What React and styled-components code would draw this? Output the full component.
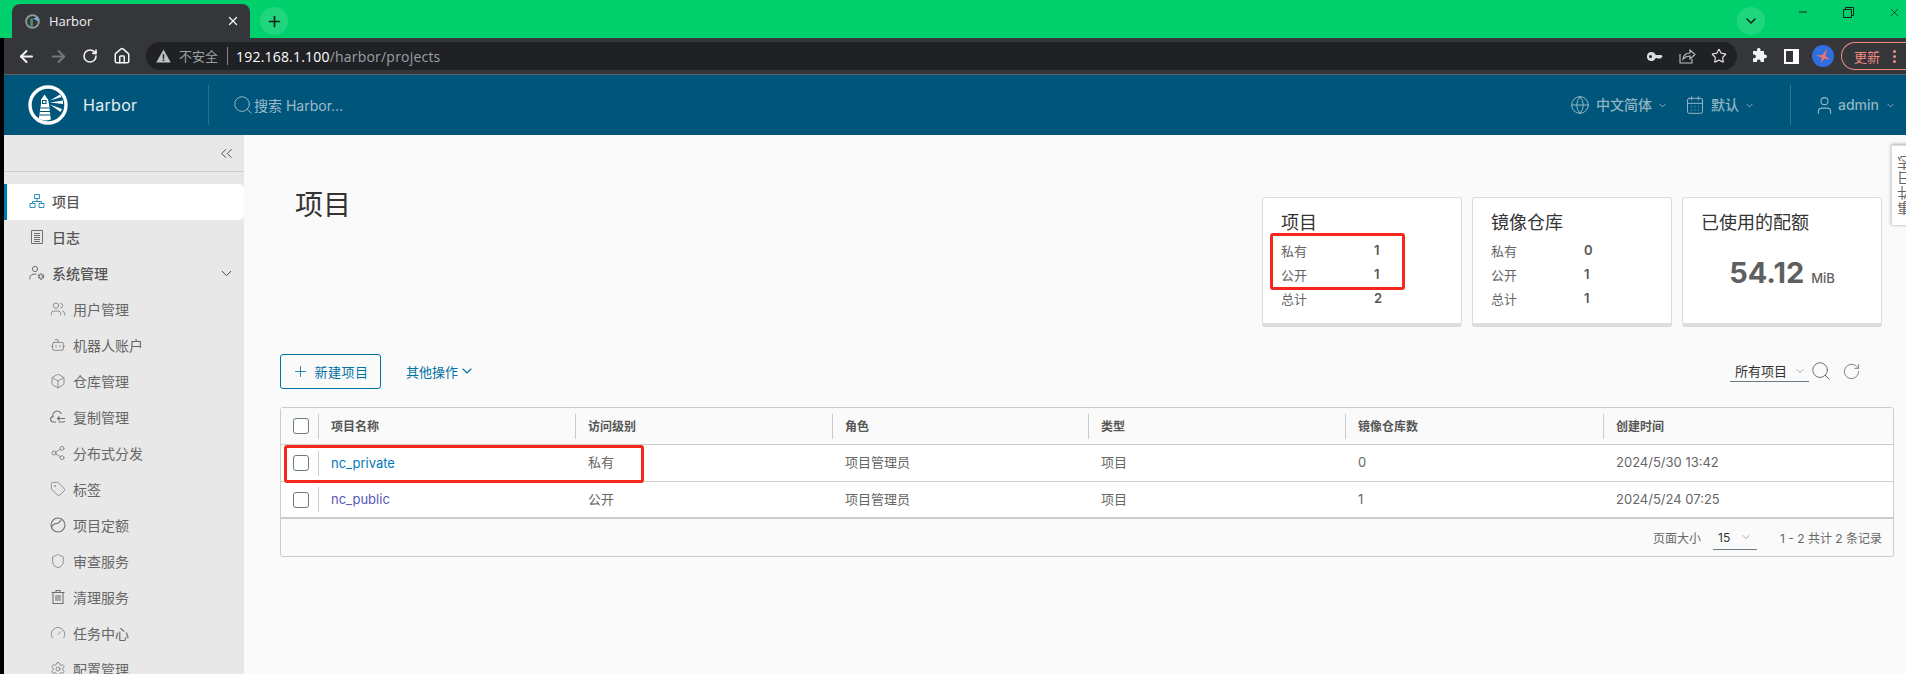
import React from 'react';
import styled, { createGlobalStyle } from 'styled-components';
import {
  ArrowLeft, ArrowRight, RotateCw, Home, Star, Users, Bot, Box, Share2, Tag, Shield, Gauge, Settings,
  Globe, CalendarDays, User, ChevronDown, ChevronsLeft, Search, Plus, X, Minus,
} from 'lucide-react';

const GlobalStyle = createGlobalStyle`
  html, body {
    margin: 0;
    padding: 0;
    background: #fafafa;
  }
  * {
    box-sizing: border-box;
  }
  body {
    font-family: Inter, "Noto Sans CJK SC", sans-serif;
  }
`;

const Window = styled.div`
  position: relative;
  width: 1906px;
  height: 674px;
  overflow: hidden;
  display: flex;
  flex-direction: column;
  background: #000;
`;

/* browser chrome */
const TabStrip = styled.div`
  height: 38px;
  flex: none;
  background: #00d06b;
  display: flex;
  align-items: flex-end;
  padding-left: 12px;
`;

const Tab = styled.div`
  width: 238px;
  height: 34px;
  background: #35363a;
  border-radius: 8px 8px 0 0;
  display: flex;
  align-items: center;
  padding: 0 10px 0 13px;
  color: #f1f3f4;
  font: 13px "Open Sans", "Noto Sans CJK SC", sans-serif;
`;

const TabTitle = styled.span`
  margin-left: 9px;
  flex: 1;
`;

const NewTab = styled.div`
  width: 28px;
  height: 28px;
  border-radius: 50%;
  background: #1fd67e;
  color: #12261b;
  display: flex;
  align-items: center;
  justify-content: center;
  margin: 0 0 3px 10px;
`;

const TabSearch = styled(NewTab)`
  margin-left: auto;
`;

const WindowButtons = styled.div`
  display: flex;
  align-items: center;
  gap: 34px;
  align-self: flex-start;
  height: 24px;
  margin-left: 32px;
  padding-right: 5px;
  color: #10231a;
`;

const Frame = styled.div`
  flex: 1;
  min-height: 0;
  margin-left: 4px;
  display: flex;
  flex-direction: column;
  background: #fafafa;
`;

const Toolbar = styled.div`
  height: 37px;
  flex: none;
  background: #35363a;
  border-bottom: 1px solid #5f6368;
  display: flex;
  align-items: center;
  padding-left: 6px;
  overflow: hidden;
`;

const ChromeButton = styled.div`
  width: 32px;
  height: 28px;
  flex: none;
  display: flex;
  align-items: center;
  justify-content: center;
  color: ${(props) => (props.$dim ? '#75777b' : '#f1f3f4')};
`;

const Omnibox = styled.div`
  flex: 1;
  height: 28px;
  margin: 0 6px 0 8px;
  border-radius: 14px;
  background: #202124;
  display: flex;
  align-items: center;
  padding: 0 2px 0 10px;
  font: 14px "Open Sans", "Noto Sans CJK SC", sans-serif;
  color: #9aa0a6;
`;

const SecurityLabel = styled.span`
  margin-left: 8px;
  font-size: 13px;
  padding-right: 9px;
  border-right: 1px solid #80868b;
  line-height: 18px;
`;

const Url = styled.span`
  margin-left: 8px;
  letter-spacing: 0.2px;
  flex: 1;
  b {
    font-weight: 500;
    color: #fff;
  }
`;

const UpdatePill = styled.div`
  width: 65px;
  height: 28px;
  flex: none;
  margin-left: 2px;
  border: 1px solid #f28b82;
  border-right: 0;
  border-radius: 14px 0 0 14px;
  display: flex;
  align-items: center;
  padding-left: 12px;
  color: #f28b82;
  font: 13px "Noto Sans CJK SC", sans-serif;
`;

const PillDots = styled.span`
  display: flex;
  flex-direction: column;
  gap: 2px;
  margin-left: 13px;
  i {
    width: 3px;
    height: 3px;
    border-radius: 50%;
    background: #f28b82;
  }
`;

/* harbor header */
const TopNav = styled.div`
  height: 60px;
  flex: none;
  background: #00567a;
  display: flex;
  align-items: center;
  color: #8fb4c5;
`;

const Brand = styled.div`
  width: 205px;
  height: 40px;
  display: flex;
  align-items: center;
  padding-left: 24px;
  border-right: 1px solid rgba(255, 255, 255, 0.15);
  color: #fff;
  font-size: 16px;
`;

const BrandName = styled.span`
  margin-left: 15px;
  color: #e4eef3;
  letter-spacing: 0.3px;
`;

const NavSearch = styled.div`
  display: flex;
  align-items: center;
  margin-left: 23px;
  font-size: 14px;
  color: #9dbccb;
`;

const NavMenus = styled.div`
  display: flex;
  align-items: center;
  margin-left: auto;
`;

const NavItem = styled.div`
  display: flex;
  align-items: center;
  font-size: 14px;
  font-weight: 500;
  margin-right: ${(props) => props.$gap || 0}px;
  span {
    margin: 0 5px 2px 6px;
  }
`;

const UserMenu = styled(NavItem)`
  height: 40px;
  padding: 0 10px 0 23px;
  border-left: 1px solid rgba(255, 255, 255, 0.2);
  margin-left: 35px;
  span {
    margin: 0 6px 2px 3px;
  }
`;

/* page body */
const Body = styled.div`
  flex: 1;
  min-height: 0;
  display: flex;
`;

const Sidebar = styled.div`
  width: 240px;
  flex: none;
  background: #e8e8e8;
`;

const Collapse = styled.div`
  height: 37px;
  border-bottom: 1px solid #cdcdcd;
  display: flex;
  align-items: center;
  justify-content: flex-end;
  padding: 0 8px 0 0;
  color: #444;
  margin-bottom: 12px;
`;

const NavRow = styled.div`
  height: 36px;
  display: flex;
  align-items: center;
  padding: 0 0 2px ${(props) => (props.$sub ? 46 : 25)}px;
  font-size: 14px;
  font-weight: ${(props) => (props.$sub ? 400 : 500)};
  color: ${(props) => (props.$sub ? '#666' : '#565656')};
  background: ${(props) => (props.$active ? '#fff' : 'transparent')};
  border-left: ${(props) => (props.$active ? '3px solid #0079b8' : '0')};
  border-radius: ${(props) => (props.$active ? '0 5px 5px 0' : '0')};
  svg {
    flex: none;
    color: ${(props) => (props.$active ? '#2d8fbd' : '#707070')};
    margin-left: ${(props) => (props.$active ? '-3px' : '0')};
  }
`;

const NavLabel = styled.span`
  margin-left: 7px;
  flex: 1;
`;

const NavCaret = styled.div`
  display: flex;
  margin-right: 9px;
  svg {
    margin: 0;
    color: #444;
  }
`;

const Main = styled.div`
  flex: 1;
  min-width: 0;
  background: #fafafa;
  padding: 52px 12px 0 36px;
`;

const PageHead = styled.div`
  display: flex;
  justify-content: space-between;
  align-items: flex-start;
`;

const PageTitle = styled.h1`
  margin: 0 0 0 15px;
  font-size: 28px;
  font-weight: 400;
  line-height: 36px;
  color: #333;
`;

const Cards = styled.div`
  display: flex;
  gap: 10px;
  margin: 10px 12px 0 0;
`;

const Card = styled.div`
  position: relative;
  width: 200px;
  height: 130px;
  background: #fff;
  border: 1px solid #ddd;
  border-bottom-width: 4px;
  border-radius: 3px;
  padding: 13px 18px 0;
`;

const CardTitle = styled.div`
  font-size: 18px;
  line-height: 24px;
  color: #333;
`;

const CardRows = styled.div`
  margin-top: 3px;
`;

const CardRow = styled.div`
  display: flex;
  height: 24px;
  align-items: center;
  font-size: 13px;
  color: #666;
  label {
    width: 93px;
  }
  b {
    font-weight: 600;
    color: #565656;
  }
`;

const QuotaValue = styled.div`
  display: flex;
  align-items: baseline;
  justify-content: center;
  margin-top: 20px;
  color: #5f5f5f;
  font-size: 29px;
  font-weight: 700;
  small {
    font-size: 13px;
    font-weight: 500;
    margin-left: 7px;
  }
`;

const RedMark = styled.div`
  position: absolute;
  border: 3px solid #f5261b;
  border-radius: 3px;
  pointer-events: none;
  left: ${(props) => props.$left}px;
  top: ${(props) => props.$top}px;
  width: ${(props) => props.$width}px;
  height: ${(props) => props.$height}px;
`;

const ActionBar = styled.div`
  height: 36px;
  margin-top: 26px;
  display: flex;
  align-items: center;
  padding-right: 33px;
`;

const NewButton = styled.div`
  width: 101px;
  height: 35px;
  border: 1px solid #0072a3;
  border-radius: 3px;
  display: flex;
  align-items: center;
  justify-content: center;
  gap: 5px;
  color: #0072a3;
  font-size: 13px;
  letter-spacing: 0.5px;
`;

const MoreActions = styled.div`
  display: flex;
  align-items: center;
  gap: 1px;
  margin-left: 25px;
  font-size: 13px;
  color: #0072a3;
`;

const FilterSelect = styled.div`
  margin-left: auto;
  width: 79px;
  height: 22px;
  border-bottom: 1px solid #6a7a84;
  display: flex;
  align-items: center;
  justify-content: space-between;
  padding: 0 3px 0 5px;
  font-size: 13px;
  color: #333;
  svg {
    color: #aaa;
  }
`;

const ActionIcon = styled.div`
  display: flex;
  margin-left: ${(props) => props.$gap}px;
  color: #666;
`;

const TableBox = styled.div`
  position: relative;
  margin-top: 18px;
  border: 1px solid #ccc;
  border-radius: 3px;
  background: #fafafa;
`;

const Row = styled.div`
  display: grid;
  grid-template-columns: 37px 257px 257px 256px 257px 258px 1fr;
  height: 37px;
  align-items: center;
  font-size: 13px;
  color: #666;
  background: ${(props) => (props.$head ? '#fafafa' : '#fff')};
  border-bottom: ${(props) => (props.$last ? '2px' : '1px')} solid #ccc;
  ${(props) => props.$head && 'font-size: 12px; font-weight: 600; color: #565656;'}
`;

const CheckCell = styled.div`
  display: flex;
  padding-left: 12px;
`;

const CheckBox = styled.div`
  width: 16px;
  height: 16px;
  border: 1px solid #6a7a84;
  border-radius: 3px;
  background: #fff;
`;

const Cell = styled.div`
  height: ${(props) => (props.$divider ? 25 : 26)}px;
  line-height: 25px;
  padding-left: 12px;
  border-left: 1px solid ${(props) => (props.$divider ? '#ccc' : 'transparent')};
`;

const ProjectLink = styled.span`
  color: ${(props) => (props.$visited ? '#5659b6' : '#0079b8')};
`;

const TableFooter = styled.div`
  height: 37px;
  display: flex;
  align-items: center;
  justify-content: flex-end;
  padding-right: 11px;
  font-size: 12px;
  color: #666;
`;

const PageSize = styled.div`
  width: 44px;
  height: 24px;
  margin: 0 23px 0 12px;
  border-bottom: 1px solid #6a7a84;
  display: flex;
  align-items: center;
  justify-content: space-between;
  padding: 0 5px;
  color: #333;
  svg {
    color: #aaa;
  }
`;

const SideTab = styled.div`
  position: absolute;
  right: -13px;
  top: 145px;
  width: 28px;
  height: 81px;
  background: #fff;
  border: 1px solid #ddd;
  box-shadow: 0 1px 3px rgba(0, 0, 0, 0.3);
  writing-mode: vertical-rl;
  transform: rotate(180deg);
  text-align: center;
  font-size: 14px;
  letter-spacing: 1px;
  line-height: 26px;
  color: #666;
`;

/* drawings */
const HarborLogo = () => (
  <svg width="40" height="40" viewBox="0 0 40 40" fill="none">
    <circle cx="20" cy="20" r="18" stroke="#fff" strokeWidth="3.4" />
    <path d="M13 14h7l1 5 1.8 15.5a16 16 0 0 1-12 -.5L13 19z" fill="#fff" />
    <path d="M13.5 14 16.5 9.5 19.5 14z" fill="#fff" />
    <path d="M14.5 15.5h3.5v3h-3.5zM12.5 23h9M12 26.5h10M11.5 30h11" stroke="#00567a" strokeWidth="1.1" />
    <path d="M22 15.5 32 9.5l1.5 2.5zM22 17.5l13-2v3.5zM22 19.5l12 4.5-1.5 3z" fill="#fff" />
  </svg>
);

const Favicon = () => (
  <svg width="15" height="15" viewBox="0 0 40 40" fill="none">
    <circle cx="20" cy="20" r="17" stroke="#8d9a96" strokeWidth="5" />
    <path d="M14 12h7v22h-7z" fill="#4e8f6a" />
    <path d="M22 12l13-5v13z" fill="#6fb0d8" />
  </svg>
);

const WarningIcon = () => (
  <svg width="15" height="14" viewBox="0 0 16 15">
    <path d="M8 .5 15.8 14.5H.2z" fill="#bdc1c6" />
    <path d="M7.2 5.5h1.6v5H7.2zM7.2 11.3h1.6v1.6H7.2z" fill="#202124" />
  </svg>
);

const KeyIcon = () => (
  <svg width="16" height="9" viewBox="0 0 16 9">
    <path d="M4.5 0a4.5 4.5 0 1 0 4.2 6H10l1 1 1-1 1 1 2.6-2.6L14.5 3H8.7A4.5 4.5 0 0 0 4.5 0zm-1 3a1.5 1.5 0 1 1 0 3 1.5 1.5 0 0 1 0-3z" fill="#dadce0" fillRule="evenodd" />
  </svg>
);

const ShareIcon = () => (
  <svg width="17" height="16" viewBox="0 0 17 16" fill="none" stroke="#bdc1c6" strokeWidth="1.1">
    <path d="M1 6v9h12v-4" />
    <path d="M4 11c.8-4 3.5-6 7-6V2l5 4.5L11 11V8c-3 0-5 1-7 3z" />
  </svg>
);

const PuzzleIcon = () => (
  <svg width="16" height="16" viewBox="0 0 16 16">
    <path d="M6 1.500a1.800 1.800 0 0 1 3.500 0V3h3.500v3.500h1a1.900 1.900 0 0 1 0 3.800h-1V14H9.600v-1a1.900 1.900 0 0 0-3.700 0v1H2v-3.700h1a1.900 1.900 0 0 0 0-3.800H2V3h4z" fill="#f1f3f4" />
  </svg>
);

const SidePanelIcon = () => (
  <svg width="15" height="15" viewBox="0 0 15 15">
    <path d="M0 0h15v15H0zM2 2v11h7V2z" fill="#fff" fillRule="evenodd" />
  </svg>
);

const Avatar = () => (
  <svg width="22" height="22" viewBox="0 0 22 22">
    <circle cx="11" cy="11" r="11" fill="#2f6fe0" />
    <path d="M15 3.500 13.500 11 18 15l-5.500-1.500L9 18l1-5.500L4 10.500l6.500-.5z" fill="#f0746c" />
  </svg>
);

const RestoreIcon = () => (
  <svg width="11" height="11" viewBox="0 0 11 11" fill="none" stroke="currentColor">
    <path d="M.5 2.500h8v8h-8zM2.500 2.500v-2h8v8h-2" />
  </svg>
);

const OrgIcon = () => (
  <svg width="16" height="16" viewBox="0 0 16 16" fill="none" stroke="currentColor">
    <path d="M5.500 1.500h5v4h-5zM1 10.500h5v4H1zM10 10.500h5v4h-5zM8 5.500v3M3.500 10.500v-2h9v2" />
  </svg>
);

const LogIcon = () => (
  <svg width="16" height="16" viewBox="0 0 16 16" fill="none" stroke="currentColor">
    <path d="M2.500 1.500h11v13h-11zM5 4.500h6M5 6.500h6M5 8.500h6M5 10.500h6M5 12.500h6" />
  </svg>
);

const AdminIcon = () => (
  <svg width="16" height="16" viewBox="0 0 16 16" fill="none" stroke="currentColor">
    <circle cx="6" cy="4" r="2.600" />
    <path d="M.8 14.500v-1.800c0-2.400 2.400-3.600 5.200-3.600.6 0 1 0 1.500.1" />
    <circle cx="12" cy="11.500" r="2.200" strokeWidth="2" strokeDasharray="1.600 .6" />
  </svg>
);

const CloudIcon = () => (
  <svg width="16" height="16" viewBox="0 0 16 16" fill="none" stroke="currentColor" strokeWidth="1.100">
    <path d="M6 13H3.500a2.700 2.700 0 0 1-.4-5.400A4.300 4.300 0 0 1 11.300 5M15 9.500H7.500M9.500 7.500l-2 2 2 2M14.500 12c0 .7-.5 1-1 1H8.500" />
  </svg>
);

const QuotaIcon = () => (
  <svg width="16" height="16" viewBox="0 0 16 16" fill="none" stroke="currentColor" strokeWidth="1.100">
    <circle cx="8" cy="8" r="7" />
    <path d="M1.500 10.500c1-3.500 3.500-4 5.500-4 1.700 0 2.500-1.200 4-3.500" />
  </svg>
);

const TrashIcon = () => (
  <svg width="16" height="16" viewBox="0 0 16 16" fill="none" stroke="currentColor" strokeWidth="1.100">
    <path d="M1.500 3.500h13M6 3.500v-2h4v2M3 3.500v11h10v-11M6 6v6M8 6v6M10 6v6" />
  </svg>
);

const iconProps = { size: 16, strokeWidth: 1.1 };

const menu = [
  { label: '项目', icon: <OrgIcon />, active: true },
  { label: '日志', icon: <LogIcon /> },
  { label: '系统管理', icon: <AdminIcon />, caret: true },
  { label: '用户管理', icon: <Users {...iconProps} />, sub: true },
  { label: '机器人账户', icon: <Bot {...iconProps} />, sub: true },
  { label: '仓库管理', icon: <Box {...iconProps} />, sub: true },
  { label: '复制管理', icon: <CloudIcon />, sub: true },
  { label: '分布式分发', icon: <Share2 {...iconProps} />, sub: true },
  { label: '标签', icon: <Tag {...iconProps} />, sub: true },
  { label: '项目定额', icon: <QuotaIcon />, sub: true },
  { label: '审查服务', icon: <Shield {...iconProps} />, sub: true },
  { label: '清理服务', icon: <TrashIcon />, sub: true },
  { label: '任务中心', icon: <Gauge {...iconProps} />, sub: true },
  { label: '配置管理', icon: <Settings {...iconProps} />, sub: true },
];

const summary = [
  { title: '项目', rows: [['私有', 1], ['公开', 1], ['总计', 2]], mark: true },
  { title: '镜像仓库', rows: [['私有', 0], ['公开', 1], ['总计', 1]] },
];

const columns = ['项目名称', '访问级别', '角色', '类型', '镜像仓库数', '创建时间'];

const projects = [
  { name: 'nc_private', access: '私有', repos: 0, time: '2024/5/30 13:42' },
  { name: 'nc_public', access: '公开', repos: 1, time: '2024/5/24 07:25', visited: true },
];

const App = () => (
  <Window>
    <GlobalStyle />
    <TabStrip>
      <Tab>
        <Favicon />
        <TabTitle>Harbor</TabTitle>
        <X size={14} strokeWidth={2.2} />
      </Tab>
      <NewTab><Plus size={17} strokeWidth={2.4} /></NewTab>
      <TabSearch><ChevronDown size={16} strokeWidth={2.4} /></TabSearch>
      <WindowButtons>
        <Minus size={12} />
        <RestoreIcon />
        <X size={13} strokeWidth={1.4} />
      </WindowButtons>
    </TabStrip>
    <Frame>
      <Toolbar>
        <ChromeButton><ArrowLeft size={19} strokeWidth={2.4} /></ChromeButton>
        <ChromeButton $dim><ArrowRight size={19} strokeWidth={2.4} /></ChromeButton>
        <ChromeButton><RotateCw size={16} strokeWidth={2.4} /></ChromeButton>
        <ChromeButton><Home size={18} strokeWidth={2} /></ChromeButton>
        <Omnibox>
          <WarningIcon />
          <SecurityLabel>不安全</SecurityLabel>
          <Url><b>192.168.1.100</b>/harbor/projects</Url>
          <ChromeButton><KeyIcon /></ChromeButton>
          <ChromeButton><ShareIcon /></ChromeButton>
          <ChromeButton><Star size={16} color="#dadce0" strokeWidth={1.8} /></ChromeButton>
        </Omnibox>
        <ChromeButton><PuzzleIcon /></ChromeButton>
        <ChromeButton><SidePanelIcon /></ChromeButton>
        <ChromeButton><Avatar /></ChromeButton>
        <UpdatePill>
          更新
          <PillDots><i /><i /><i /></PillDots>
        </UpdatePill>
      </Toolbar>
      <TopNav>
        <Brand>
          <HarborLogo />
          <BrandName>Harbor</BrandName>
        </Brand>
        <NavSearch>
          <Search size={22} strokeWidth={1} />
          搜索 Harbor...
        </NavSearch>
        <NavMenus>
          <NavItem $gap={17}>
            <Globe size={20} strokeWidth={1.2} />
            <span>中文简体</span>
            <ChevronDown size={11} />
          </NavItem>
          <NavItem>
            <CalendarDays size={20} strokeWidth={1.2} />
            <span>默认</span>
            <ChevronDown size={11} />
          </NavItem>
          <UserMenu>
            <User size={21} strokeWidth={1.2} />
            <span>admin</span>
            <ChevronDown size={11} />
          </UserMenu>
        </NavMenus>
      </TopNav>
      <Body>
        <Sidebar>
          <Collapse><ChevronsLeft size={19} strokeWidth={1.2} /></Collapse>
          {menu.map((item) => (
            <NavRow key={item.label} $sub={item.sub} $active={item.active}>
              {item.icon}
              <NavLabel>{item.label}</NavLabel>
              {item.caret && <NavCaret><ChevronDown size={17} strokeWidth={1.4} /></NavCaret>}
            </NavRow>
          ))}
        </Sidebar>
        <Main>
          <PageHead>
            <PageTitle>项目</PageTitle>
            <Cards>
              {summary.map((card) => (
                <Card key={card.title}>
                  <CardTitle>{card.title}</CardTitle>
                  <CardRows>
                    {card.rows.map(([label, value]) => (
                      <CardRow key={label}>
                        <label>{label}</label>
                        <b>{value}</b>
                      </CardRow>
                    ))}
                  </CardRows>
                  {card.mark && <RedMark $left={7} $top={35} $width={135} $height={57} />}
                </Card>
              ))}
              <Card>
                <CardTitle>已使用的配额</CardTitle>
                <QuotaValue>54.12<small>MiB</small></QuotaValue>
              </Card>
            </Cards>
          </PageHead>
          <ActionBar>
            <NewButton><Plus size={17} strokeWidth={1.2} />新建项目</NewButton>
            <MoreActions>其他操作<ChevronDown size={16} strokeWidth={1.6} /></MoreActions>
            <FilterSelect>所有项目<ChevronDown size={12} /></FilterSelect>
            <ActionIcon $gap={1}><Search size={22} strokeWidth={1} /></ActionIcon>
            <ActionIcon $gap={10}><RotateCw size={19} strokeWidth={1} /></ActionIcon>
          </ActionBar>
          <TableBox>
            <Row $head>
              <CheckCell><CheckBox /></CheckCell>
              {columns.map((name) => <Cell key={name} $divider>{name}</Cell>)}
            </Row>
            {projects.map((project, i) => (
              <Row key={project.name} $last={i === projects.length - 1}>
                <CheckCell><CheckBox /></CheckCell>
                <Cell $divider><ProjectLink $visited={project.visited}>{project.name}</ProjectLink></Cell>
                <Cell>{project.access}</Cell>
                <Cell>项目管理员</Cell>
                <Cell>项目</Cell>
                <Cell>{project.repos}</Cell>
                <Cell>{project.time}</Cell>
              </Row>
            ))}
            <TableFooter>
              页面大小
              <PageSize>15<ChevronDown size={12} /></PageSize>
              1 - 2 共计 2 条记录
            </TableFooter>
            <RedMark $left={3} $top={37} $width={360} $height={38} />
          </TableBox>
        </Main>
      </Body>
    </Frame>
    <SideTab>事件日志</SideTab>
  </Window>
);

export default App;
